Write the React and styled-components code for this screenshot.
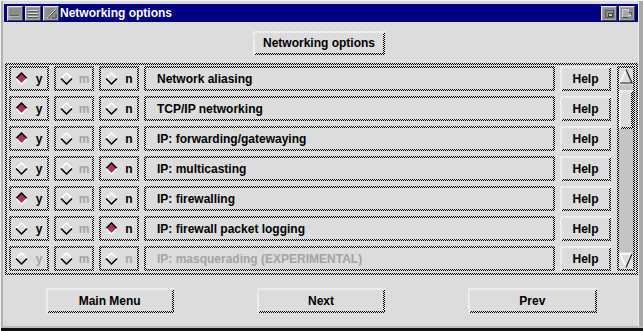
import React from 'react';
import styled, { createGlobalStyle, css } from 'styled-components';

const BG = '#dcdcdc';
const DIS = '#a3a3a3';
const checker = (c, bg = BG) => `repeating-conic-gradient(${c} 0 25%, ${bg} 0 50%)`;

const Global = createGlobalStyle`
  html, body { margin: 0; padding: 0; background: ${BG}; }
  body { font-family: "Liberation Sans", Arial, sans-serif; }
  * { box-sizing: border-box; }
`;

const sunken = css`
  border: 2px solid transparent;
  background:
    linear-gradient(${BG}, ${BG}) padding-box,
    ${checker('#000')} 0 0 / 2px 2px border-box;
`;

const raised = css`
  border: 2px solid transparent;
  background:
    linear-gradient(${BG}, ${BG}) padding-box,
    ${checker('#fff')} left top / 2px 2px repeat-x border-box,
    ${checker('#fff')} left top / 2px 2px repeat-y border-box,
    ${checker('#000')} left bottom / 2px 2px repeat-x border-box,
    ${checker('#000')} right top / 2px 2px repeat-y border-box,
    ${BG};
`;

const Window = styled.div`
  width: 643px;
  height: 331px;
  background: ${BG};
  padding: 4px 5px 0 4px;
  display: flex;
  flex-direction: column;
  box-shadow:
    inset 0 1px 0 #f2f2f2,
    inset 1px 0 0 #f2f2f2,
    inset 0 -3px 0 #111,
    inset 0 -5px 0 #b8b8b8,
    inset -4px 0 0 #a8a8a8,
    inset -5px 0 0 #ececec,
    inset 3px 0 0 #b0b0b0;
`;

const TitleBar = styled.div`
  height: 18px;
  background: #000080;
  display: flex;
  align-items: center;
  padding: 0 3px;
  gap: 2px;
`;

const TitleText = styled.span`
  color: #fff;
  font-weight: bold;
  font-size: 12px;
  margin-left: -1px;
  flex: 1;
  white-space: nowrap;
`;

const TitleBtn = styled.span`
  width: 16px;
  height: 15px;
  background: #a4a4a4;
  border-top: 1px solid #e6e6e6;
  border-left: 1px solid #e6e6e6;
  border-right: 1px solid #404040;
  border-bottom: 1px solid #404040;
  display: flex;
  align-items: center;
  justify-content: center;
  svg { display: block; }
`;

const TopRow = styled.div`
  display: flex;
  justify-content: center;
  margin-top: 9px;
  padding-right: 4px;
`;

const Button = styled.div`
  ${raised};
  width: ${(p) => p.$w}px;
  height: ${(p) => p.$h || 25}px;
  display: flex;
  align-items: center;
  justify-content: center;
  font-weight: bold;
  font-size: 12px;
  color: #000;
  white-space: nowrap;
`;

const Frame = styled.div`
  ${sunken};
  margin: 8px 0 0 1px;
  height: 212px;
  padding: 1px 1px 2px 2px;
  display: flex;
  gap: 6px;
`;

const Rows = styled.div`
  display: grid;
  grid-template-columns: 40px 40px 40px 411px 51px;
  grid-auto-rows: 25px;
  gap: 5px;
`;

const Toggle = styled.div`
  ${sunken};
  display: flex;
  align-items: center;
  padding-left: 4px;
  gap: 3px;
  svg { display: block; flex: none; }
`;

const Letter = styled.span`
  width: 16px;
  text-align: center;
  font-weight: bold;
  font-size: 12px;
  color: ${(p) => (p.$off ? DIS : '#000')};
  line-height: 1;
`;

const Label = styled.div`
  ${sunken};
  display: flex;
  align-items: center;
  padding-left: 11px;
  font-weight: bold;
  font-size: 12px;
  color: ${(p) => (p.$off ? DIS : '#000')};
  white-space: nowrap;
`;

const Scrollbar = styled.div`
  width: 18px;
  height: 205px;
  border: 2px solid transparent;
  background:
    linear-gradient(#c4c4c4, #c4c4c4) padding-box,
    ${checker('#000')} 0 0 / 2px 2px border-box;
  display: flex;
  flex-direction: column;
  align-items: center;
  svg { display: block; }
`;

const Thumb = styled.div`
  ${raised};
  width: 14px;
  height: 39px;
  margin-top: 5px;
`;

const Spacer = styled.div`
  flex: 1;
`;

const BottomRow = styled.div`
  display: grid;
  grid-template-columns: repeat(3, 1fr);
  justify-items: center;
  margin-top: 13px;
`;

const Diamond = ({ on }) => (
  <svg width="13" height="13" viewBox="0 0 13 13">
    <polygon points="6.5,1 12,6.5 6.5,12 1,6.5" fill={on ? '#b03060' : BG} />
    <polyline points="1,6.5 6.5,1 12,6.5" fill="none" stroke={on ? '#000' : '#fff'} strokeWidth="1.5" />
    <polyline points="1,6.5 6.5,12 12,6.5" fill="none" stroke={on ? '#fff' : '#000'} strokeWidth="1.5" />
  </svg>
);

const rows = [
  { label: 'Network aliasing', v: 'y' },
  { label: 'TCP/IP networking', v: 'y' },
  { label: 'IP: forwarding/gatewaying', v: 'y' },
  { label: 'IP: multicasting', v: 'n' },
  { label: 'IP: firewalling', v: 'y' },
  { label: 'IP: firewall packet logging', v: 'n' },
  { label: 'IP: masquerading (EXPERIMENTAL)', v: '', off: true },
];

export default function App() {
  return (
    <>
      <Global />
      <Window>
        <TitleBar>
          <TitleBtn>
            <svg width="14" height="13" viewBox="0 0 14 13">
              <rect x="1" y="1" width="12" height="11" fill="#8c8c8c" />
              <path d="M2 11 V9 H12" fill="none" stroke="#d8d8d8" strokeWidth="1" />
              <path d="M2 8.5 H11" stroke="#5a5a5a" strokeWidth="1" />
            </svg>
          </TitleBtn>
          <TitleBtn>
            <svg width="14" height="13" viewBox="0 0 14 13">
              <rect x="1" y="1" width="12" height="11" fill="#8c8c8c" />
              <path d="M2 3.5 H12 M2 6.5 H12 M2 9.5 H12" stroke="#d8d8d8" strokeWidth="1" />
              <path d="M2 4.5 H12 M2 7.5 H12 M2 10.5 H12" stroke="#5a5a5a" strokeWidth="1" />
            </svg>
          </TitleBtn>
          <TitleBtn>
            <svg width="14" height="13" viewBox="0 0 14 13">
              <rect x="1" y="1" width="12" height="11" fill="#8c8c8c" />
              <path d="M3 11 L12 2" stroke="#d8d8d8" strokeWidth="1" />
              <path d="M4 11 L12 3 M8 11 H12 V7" stroke="#4a4a4a" strokeWidth="1" fill="none" />
            </svg>
          </TitleBtn>
          <TitleText>Networking options</TitleText>
          <TitleBtn>
            <svg width="14" height="13" viewBox="0 0 14 13">
              <rect x="1" y="1" width="12" height="11" fill="#8c8c8c" />
              <rect x="3.5" y="3.5" width="8" height="7" fill="none" stroke="#5a5a5a" />
              <rect x="6.5" y="6.5" width="4" height="3" fill="#d0d0d0" stroke="#404040" />
            </svg>
          </TitleBtn>
          <TitleBtn>
            <svg width="14" height="13" viewBox="0 0 14 13">
              <rect x="1" y="1" width="12" height="11" fill="#8c8c8c" />
              <path d="M2.5 2.5 H8.5 V5.5 H11.5 V8.5 H8.5 V10.5 H2.5 Z" fill="#a8a8a8" stroke="#d8d8d8" />
              <path d="M8.5 5.5 H11.5 V8.5 M8.5 10.5 H2.5" fill="none" stroke="#4a4a4a" />
            </svg>
          </TitleBtn>
        </TitleBar>

        <TopRow>
          <Button $w={132} $h={24}>Networking options</Button>
        </TopRow>

        <Frame>
          <Rows>
            {rows.map((r) => (
              <React.Fragment key={r.label}>
                <Toggle>
                  <Diamond on={r.v === 'y'} />
                  <Letter $off={r.off}>y</Letter>
                </Toggle>
                <Toggle>
                  <Diamond on={false} />
                  <Letter $off>m</Letter>
                </Toggle>
                <Toggle>
                  <Diamond on={r.v === 'n'} />
                  <Letter $off={r.off}>n</Letter>
                </Toggle>
                <Label $off={r.off}>{r.label}</Label>
                <Button $w={51}>Help</Button>
              </React.Fragment>
            ))}
          </Rows>
          <Scrollbar>
            <svg width="14" height="17" viewBox="0 0 14 17">
              <rect x="0" y="0" width="14" height="17" fill={BG} />
              <polygon points="7,1.5 13,15 1,15" fill={BG} />
              <path d="M1 15 L7 1.5" stroke="#fff" strokeWidth="1.5" />
              <path d="M7 1.5 L13 15 H1" fill="none" stroke="#222" strokeWidth="1.2" />
            </svg>
            <Thumb />
            <Spacer />
            <svg width="14" height="17" viewBox="0 0 14 17">
              <rect x="0" y="0" width="14" height="17" fill={BG} />
              <polygon points="1,2 13,2 7,15.5" fill={BG} />
              <path d="M1 2 H13 M1 2 L7 15.5" fill="none" stroke="#fff" strokeWidth="1.5" />
              <path d="M13 2 L7 15.5" stroke="#222" strokeWidth="1.2" />
            </svg>
          </Scrollbar>
        </Frame>

        <BottomRow>
          <Button $w={128}>Main Menu</Button>
          <Button $w={128}>Next</Button>
          <Button $w={129}>Prev</Button>
        </BottomRow>
      </Window>
    </>
  );
}
